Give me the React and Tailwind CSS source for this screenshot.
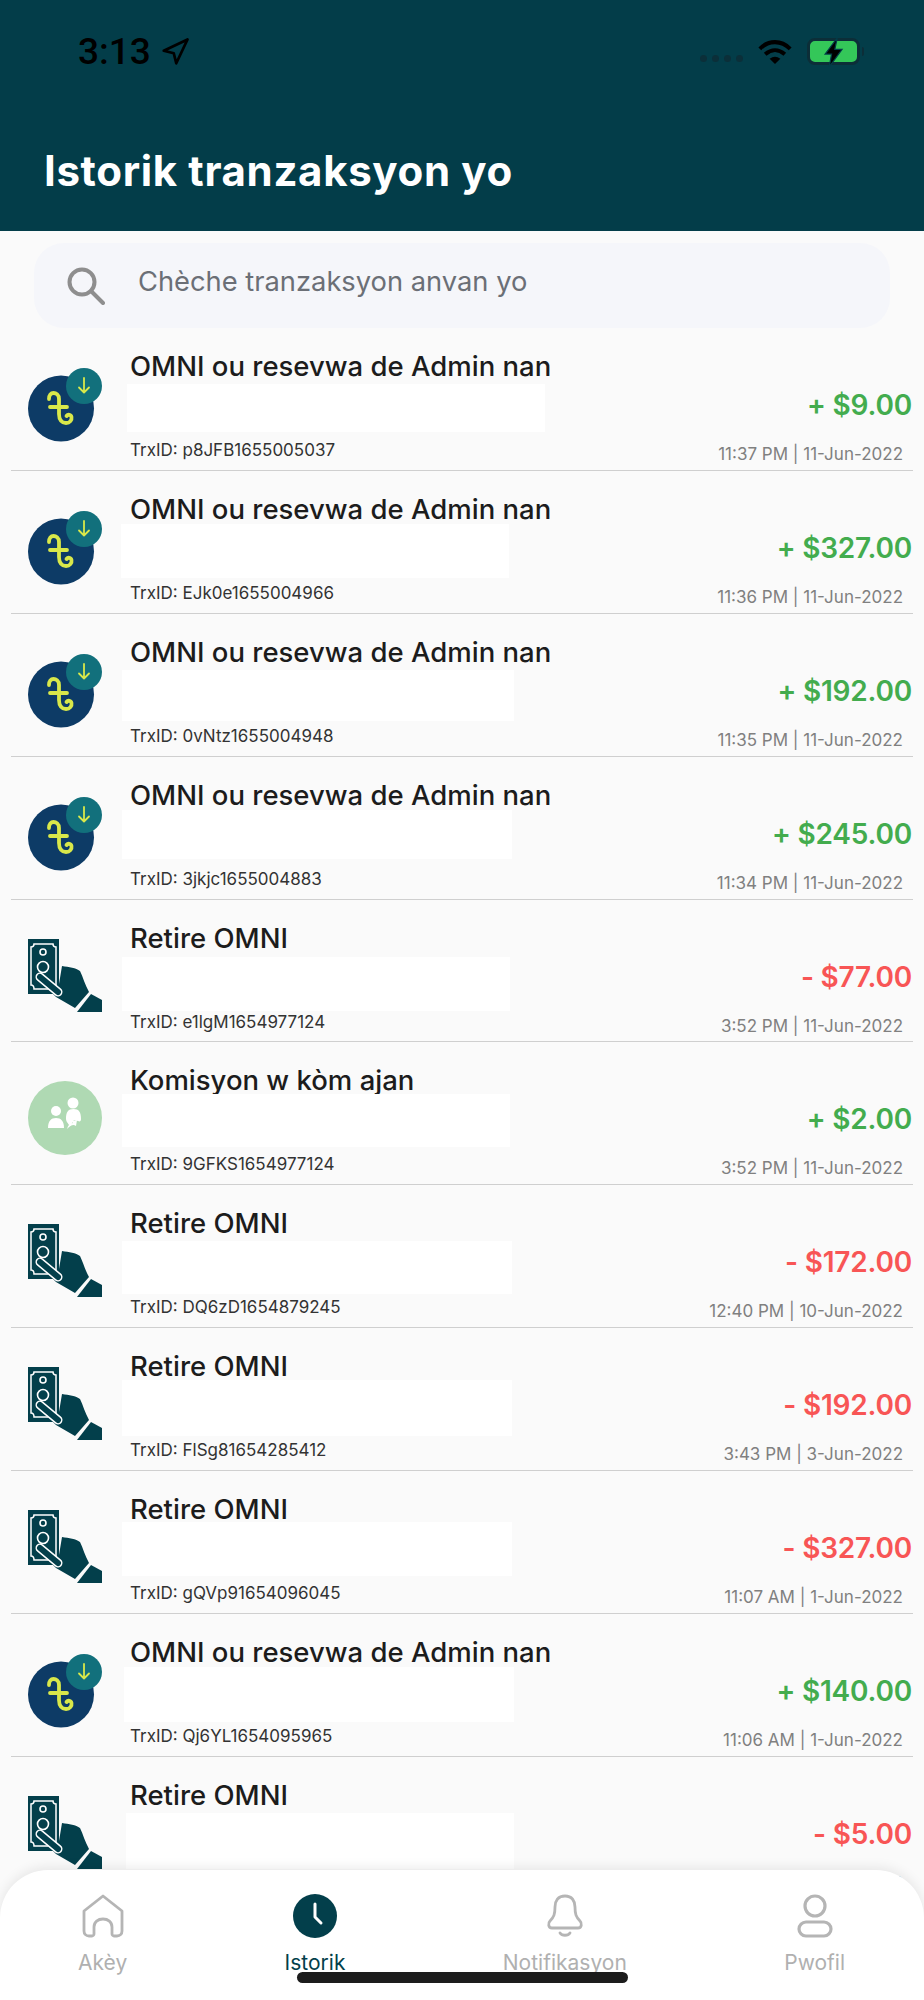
const ROWS = [
  { title: 'OMNI ou resevwa de Admin nan', trx: 'p8JFB1655005037', amount: '+ $9.00', date: '11:37 PM | 11-Jun-2022', icon: 'omni', mask: 'left-[127px] top-[56px] h-[48px] w-[418px]' },
  { title: 'OMNI ou resevwa de Admin nan', trx: 'EJk0e1655004966', amount: '+ $327.00', date: '11:36 PM | 11-Jun-2022', icon: 'omni', mask: 'left-[121px] top-[53px] h-[54px] w-[388px]' },
  { title: 'OMNI ou resevwa de Admin nan', trx: '0vNtz1655004948', amount: '+ $192.00', date: '11:35 PM | 11-Jun-2022', icon: 'omni', mask: 'left-[122px] top-[56px] h-[51px] w-[392px]' },
  { title: 'OMNI ou resevwa de Admin nan', trx: '3jkjc1655004883', amount: '+ $245.00', date: '11:34 PM | 11-Jun-2022', icon: 'omni', mask: 'left-[122px] top-[53px] h-[49px] w-[390px]' },
  { title: 'Retire OMNI', trx: 'e1lgM1654977124', amount: '- $77.00', date: '3:52 PM | 11-Jun-2022', icon: 'cash', mask: 'left-[122px] top-[57px] h-[54px] w-[388px]' },
  { title: 'Komisyon w kòm ajan', trx: '9GFKS1654977124', amount: '+ $2.00', date: '3:52 PM | 11-Jun-2022', icon: 'agent', mask: 'left-[122px] top-[52px] h-[53px] w-[388px]' },
  { title: 'Retire OMNI', trx: 'DQ6zD1654879245', amount: '- $172.00', date: '12:40 PM | 10-Jun-2022', icon: 'cash', mask: 'left-[122px] top-[56px] h-[53px] w-[390px]' },
  { title: 'Retire OMNI', trx: 'FlSg81654285412', amount: '- $192.00', date: '3:43 PM | 3-Jun-2022', icon: 'cash', mask: 'left-[122px] top-[52px] h-[56px] w-[390px]' },
  { title: 'Retire OMNI', trx: 'gQVp91654096045', amount: '- $327.00', date: '11:07 AM | 1-Jun-2022', icon: 'cash', mask: 'left-[122px] top-[51px] h-[54px] w-[390px]' },
  { title: 'OMNI ou resevwa de Admin nan', trx: 'Qj6YL1654095965', amount: '+ $140.00', date: '11:06 AM | 1-Jun-2022', icon: 'omni', mask: 'left-[124px] top-[53px] h-[55px] w-[390px]' },
  { title: 'Retire OMNI', trx: 'xT4mK1654095120', amount: '- $5.00', date: '11:02 AM | 1-Jun-2022', icon: 'cash', mask: 'left-[126px] top-[56px] h-[56px] w-[388px]' },
]

function OmniIcon() {
  return (
    <svg width="75" height="75" viewBox="0 0 75 75" className="mt-[4px]">
      <circle cx="33" cy="40.500" r="33" fill="#0d3b66" />
      <circle cx="56" cy="18" r="18" fill="#12707c" />
      <path d="M21 31c0-4 2-6 4.500-6s5.500 2 5.500 6v15c0 6 3 9 7 9s6-3 5.500-6c-.5-2.500-3.500-3-5-1M22 39h17" fill="none" stroke="#d9e84a" strokeWidth="3.800" strokeLinecap="round" />
      <path d="M56 10v14M51 19.500l5 5 5-5" fill="none" stroke="#d9e84a" strokeWidth="1.800" strokeLinecap="round" strokeLinejoin="round" />
    </svg>
  )
}

function CashIcon() {
  return (
    <svg width="75" height="74" viewBox="0 0 75 74">
      <rect x="0" y="0" width="31" height="55" fill="#033f4b" />
      <path d="M6 5h19c0 2 1 3 3 3v38c-2 0-3 1-3 4H6c0-3-1-4-3-4V8c2 0 3-1 3-3z" fill="none" stroke="#fff" strokeWidth="1.500" />
      <circle cx="15" cy="13" r="3" fill="none" stroke="#fff" strokeWidth="1.600" />
      <circle cx="15" cy="28" r="5.500" fill="none" stroke="#fff" strokeWidth="1.600" />
      <path d="M34 27c7 1 14 2 18 5 3 6 5 14 9 21L47 69 28 58l-8-8 10 1z" fill="#033f4b" />
      <path d="M12 38l18 15" stroke="#fff" strokeWidth="9" strokeLinecap="round" />
      <path d="M12 38l18 15" stroke="#033f4b" strokeWidth="6" strokeLinecap="round" />
      <path d="M63 55l11 6v12H49z" fill="#033f4b" />
    </svg>
  )
}

function AgentIcon() {
  return (
    <svg width="74" height="74" viewBox="0 0 74 74">
      <circle cx="37" cy="37" r="37" fill="#afd9b3" />
      <circle cx="28" cy="30" r="5" fill="#fff" />
      <path d="M20 47c0-7 3-10 8-10s8 3 8 10z" fill="#fff" />
      <circle cx="45" cy="22" r="5.500" fill="#fff" />
      <path d="M38 38c0-7 2-10 7.500-10S53 31 53 38c0 2-1 3-3 2l-4-1-3 5h-2c-2-3-3-4-3-6z" fill="#fff" />
      <path d="M39 48c1-4 3-6 6-6l-1-2 5-1-1 6-2-1c-3 0-5 2-7 4z" fill="#fff" />
    </svg>
  )
}

const ICONS = { omni: OmniIcon, cash: CashIcon, agent: AgentIcon }

function TxRow({ row }) {
  const Icon = ICONS[row.icon]
  const up = row.amount.startsWith('+')
  return (
    <div className="relative flex h-[142.9px] border-b-[1.5px] border-[#cfcfcf] mx-[11px] pr-[1px]">
      <div className="flex w-[108px] shrink-0 items-center pl-[17px] pt-[10px]">
        <Icon />
      </div>
      <div className="pl-[11px] pt-[20px]">
        <div className="text-[27.500px] leading-[36px] font-medium text-[#1c1c1c] whitespace-nowrap">{row.title}</div>
        <div className="mt-[54px] text-[17px] leading-[24px] text-[#333] whitespace-nowrap">TrxID: {row.trx}</div>
      </div>
      <div className={`absolute bg-white ml-[-11px] ${row.mask}`} />
      <div className="ml-auto flex flex-col items-end pt-[59px]">
        <div className={`text-[28px] leading-[36px] font-semibold tracking-[-0.2px] ${up ? 'text-[#43ac4e]' : 'text-[#f85555]'}`}>{row.amount}</div>
        <div className="mt-[19px] mr-[9px] text-[17px] leading-[24px] text-[#808080] whitespace-nowrap">{row.date}</div>
      </div>
    </div>
  )
}

function StatusBar() {
  return (
    <div className="flex h-[66px] items-start justify-between pl-[78px] pr-[60px] pt-[34px]">
      <div className="flex items-center gap-[9px]">
        <span className="text-[37px] leading-[36px] font-medium text-black font-['Roboto',sans-serif]">3:13</span>
        <svg width="30" height="30" viewBox="0 0 24 24" fill="none" stroke="#000" strokeWidth="2.200" strokeLinejoin="round">
          <path d="M3 11L22 2l-9 19-2-8z" />
        </svg>
      </div>
      <div className="flex items-center gap-[14px] pt-[4px]">
        <div className="flex gap-[5px] pt-[14px]">
          <span className="h-[7px] w-[7px] rounded-full bg-[#0b2f39]" />
          <span className="h-[7px] w-[7px] rounded-full bg-[#0b2f39]" />
          <span className="h-[7px] w-[7px] rounded-full bg-[#0b2f39]" />
          <span className="h-[7px] w-[7px] rounded-full bg-[#0b2f39]" />
        </div>
        <svg width="36" height="25" viewBox="0 0 38 28">
          <path d="M2 11c10-10 24-10 34 0" fill="none" stroke="#000" strokeWidth="4.500" />
          <path d="M8 17c7-6 15-6 22 0" fill="none" stroke="#000" strokeWidth="4.500" />
          <path d="M13 22c4-3 8-3 12 0l-6 6z" fill="#000" />
        </svg>
        <div className="flex items-center">
          <div className="relative h-[27px] w-[53px] rounded-[8px] border-[3px] border-[#0c2e38] bg-[#34c759]">
            <svg width="22" height="29" viewBox="0 0 26 36" className="absolute left-[13px] top-[-3px]">
              <path d="M17 0L2 20h8L7 36l16-22h-9z" fill="#000" stroke="#033d49" strokeWidth="1.500" />
            </svg>
          </div>
          <span className="ml-[2px] h-[9px] w-[2px] rounded-r-full bg-[#0c2e38]" />
        </div>
      </div>
    </div>
  )
}

function NavItem({ label, active, children }) {
  return (
    <div className="flex flex-col items-center">
      <div className="flex h-[44px] items-center">{children}</div>
      <span className={`mt-[12px] text-[21px] leading-[26px] ${active ? 'text-[#033f4b]' : 'text-[#b0b0b0]'}`}>{label}</span>
    </div>
  )
}

function BottomNav() {
  return (
    <div className="absolute inset-x-0 bottom-0 h-[130px] rounded-t-[48px] bg-white shadow-[0_-3px_12px_rgba(0,0,0,0.08)]">
      <div className="flex justify-between pl-[78px] pr-[79px] pt-[24px]">
        <NavItem label="Akèy">
          <svg width="42" height="44" viewBox="0 0 42 44" fill="none" stroke="#b5b5b5" strokeWidth="2.800" strokeLinejoin="round">
            <path d="M21 2L40 17v20c0 3-2 5-5 5h-3c-1 0-2-1-2-2v-7c0-5-4-8-9-8s-9 3-9 8v7c0 1-1 2-2 2H7c-3 0-5-2-5-5V17z" />
          </svg>
        </NavItem>
        <NavItem label="Istorik" active>
          <svg width="44" height="44" viewBox="0 0 44 44">
            <circle cx="22" cy="22" r="22" fill="#033f4b" />
            <path d="M22 10v13l6 6" fill="none" stroke="#fff" strokeWidth="3" strokeLinecap="round" strokeLinejoin="round" />
          </svg>
        </NavItem>
        <NavItem label="Notifikasyon">
          <svg width="38" height="44" viewBox="0 0 38 44" fill="none" stroke="#b5b5b5" strokeWidth="2.800" strokeLinecap="round" strokeLinejoin="round">
            <path d="M19 2c-7 0-10 5-10 11 0 7-1 10-5 14-2 2-2 7 2 7h26c4 0 4-5 2-7-4-4-5-7-5-14 0-6-3-11-10-11z" />
            <path d="M14 39c2 3 8 3 10 0" />
          </svg>
        </NavItem>
        <NavItem label="Pwofil">
          <svg width="36" height="44" viewBox="0 0 36 44" fill="none" stroke="#b5b5b5" strokeWidth="3.200">
            <ellipse cx="18" cy="12" rx="10" ry="10" />
            <rect x="2" y="28" width="32" height="14" rx="7" />
          </svg>
        </NavItem>
      </div>
      <div className="absolute bottom-[17px] left-[297px] h-[11px] w-[331px] rounded-full bg-[#1c1c1c]" />
    </div>
  )
}

export default function App() {
  return (
    <div className="relative h-[2000px] w-[924px] overflow-hidden bg-[#fafafa] font-['Inter',sans-serif]">
      <div className="h-[231px] bg-[#033d49]">
        <StatusBar />
        <h1 className="mt-[81px] pl-[44px] text-[42px] leading-[48px] font-bold text-white tracking-[0.65px]">Istorik tranzaksyon yo</h1>
      </div>

      <div className="px-[34px] pt-[12px]">
        <div className="flex h-[85px] items-center rounded-[30px] bg-[#f5f6fa] pl-[33px]">
          <svg width="38" height="38" viewBox="0 0 38 38" fill="none" stroke="#8e8e8e" strokeWidth="4">
            <circle cx="15" cy="15" r="12.500" />
            <path d="M24 24l12 12" strokeLinecap="round" />
          </svg>
          <span className="ml-[33px] pb-[6px] text-[27.300px] text-[#6b6f76]">Chèche tranzaksyon anvan yo</span>
        </div>
      </div>

      <div>
        {ROWS.map(row => <TxRow key={row.trx} row={row} />)}
      </div>

      <BottomNav />
    </div>
  )
}
